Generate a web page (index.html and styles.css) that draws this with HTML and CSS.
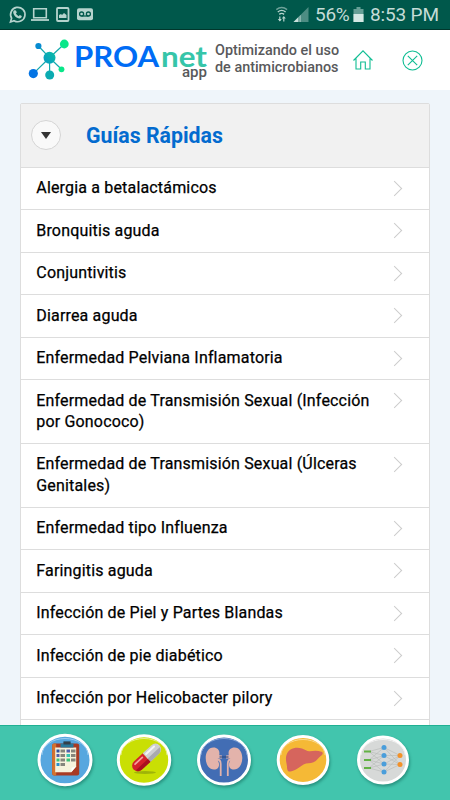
FILE: index.html
```
<!DOCTYPE html>
<html lang="es">

<head>
    <meta charset="UTF-8">
    <meta name="viewport" content="width=device-width, initial-scale=1.0">
    <title>PROAnet app</title>
    <link rel="stylesheet" href="styles.css">
</head>

<body>
    <div class="status">
        <svg class="status-left" width="100" height="30" viewBox="0 0 100 30" fill="none" stroke="#b5d3cd">
            <path d="M10.500 22l1.100-3.800a7.200 7.200 0 1 1 2.500 2.500z" stroke-width="1.7"/>
            <path d="M14.500 10.300l1.500.2.8 2-.9 1.100c.7 1.300 1.500 2 2.800 2.600l1.100-1.100 2 1c0 1.400-1 2.300-2.300 2.300-3.200-.3-6-3.300-6.300-6 0-.9.500-1.800 1.300-2.100z" fill="#b5d3cd" stroke="none"/>
            <path d="M33.700 8.800h12.600v8.900H33.700z" stroke-width="1.6"/>
            <path d="M31 20h18" stroke-width="1.8"/>
            <rect x="57" y="8" width="11.5" height="13" rx="1" stroke-width="1.8"/>
            <path d="M59 18v-3l2-1 1 1 2-2 2.500 2v3z" fill="#b5d3cd" stroke="none"/>
            <rect x="77" y="8.2" width="16" height="12" rx="2" fill="#b5d3cd" stroke="none"/>
            <g stroke="#00584b" stroke-width="1.3">
                <circle cx="81.6" cy="14" r="2"/>
                <circle cx="88.4" cy="14" r="2"/>
                <path d="M81.600 16h6.800"/>
            </g>
        </svg>
        <svg class="signal" width="36" height="30" viewBox="0 0 36 30">
            <g fill="none" stroke="#b5d3cd" stroke-width="1.4">
                <path d="M1.300 9.600q5.400-4.200 10.800 0" opacity=".6"/>
                <path d="M2.800 12q3.900-3.200 7.800 0M4.300 14.400q2.400-2 4.800 0"/>
                <path d="M4.800 21v-4.500M8.800 17v4.500" stroke-width="1.2"/>
            </g>
            <path d="M2.800 19h4l-2 2.500zM6.800 18.500h4l-2-2.500z" fill="#b5d3cd"/>
            <path d="M18.500 22L33.500 7v15z" fill="#4d8d83"/>
            <path d="M18.500 22l7-7v7z" fill="#c8e0db"/>
            <path d="M24 14v8" stroke="#00584b" stroke-width=".8"/>
        </svg>
        <span class="percent">56%</span>
        <svg class="battery" width="12" height="30" viewBox="0 0 12 30">
            <path d="M3.500 7h4v2h3v13H.5V9h3z" fill="#669f96"/>
            <path d="M.5 14h10v8H.5z" fill="#d5e8e4"/>
        </svg>
        <span class="clock">8:53 PM</span>
    </div>

    <header class="header">
        <svg class="logo" width="210" height="60" viewBox="0 0 210 60">
            <defs>
                <linearGradient id="node" x1="43" y1="34" x2="56" y2="22" gradientUnits="userSpaceOnUse">
                    <stop offset="0" stop-color="#0798c4"/>
                    <stop offset="1" stop-color="#0abfa5"/>
                </linearGradient>
            </defs>
            <path d="M49.500 27.700L38.400 16M49.500 27.700L64.300 14M49.500 27.700L33.300 43.600M49.500 27.700L49.700 45M49.500 27.700L61.500 39.300" stroke="#14a9ad" stroke-width="1.2"/>
            <circle cx="49.5" cy="27.7" r="6" fill="url(#node)"/>
            <circle cx="38.4" cy="16" r="3.1" fill="#078bd1"/>
            <circle cx="64.3" cy="14" r="4.4" fill="#08e789"/>
            <circle cx="33.3" cy="43.6" r="4.6" fill="#0474e4"/>
            <circle cx="49.7" cy="45" r="4.5" fill="#0babb1"/>
            <circle cx="61.5" cy="39.3" r="2.9" fill="#08e789"/>
            <text class="logo-name" x="74" y="36.6" textLength="85" lengthAdjust="spacingAndGlyphs" fill="#006cf5">PROA</text>
            <text class="logo-name" x="161" y="36.6" textLength="46" lengthAdjust="spacingAndGlyphs" fill="#36c5a9">net</text>
            <text class="logo-app" x="182" y="47" textLength="25" lengthAdjust="spacingAndGlyphs">app</text>
        </svg>
        <p class="slogan">Optimizando el uso<br>de antimicrobianos</p>
        <svg class="home" width="20" height="20" viewBox="0 0 20 20" fill="none" stroke="#10bd93" stroke-width="1.1">
            <path d="M.5 10.500L10 .9l9.500 9.600M3 8.500v10.500h4.700v-7h4.600v7H17V8.500"/>
        </svg>
        <svg class="close" width="21" height="21" viewBox="0 0 21 21" fill="none" stroke="#10bd93" stroke-width="1.1">
            <circle cx="10.5" cy="10.5" r="9.5"/>
            <path d="M5.800 5.800l9.400 9.400M15.200 5.800l-9.400 9.400"/>
        </svg>
    </header>

    <main class="content">
        <section class="guides">
            <div class="guides-head">
                <button class="toggle" aria-label="Cerrar"><span class="triangle"></span></button>
                <h1>Guías Rápidas</h1>
            </div>
            <ul class="list">
                <li>Alergia a betalactámicos</li>
                <li>Bronquitis aguda</li>
                <li>Conjuntivitis</li>
                <li>Diarrea aguda</li>
                <li>Enfermedad Pelviana Inflamatoria</li>
                <li>Enfermedad de Transmisión Sexual (Infección por Gonococo)</li>
                <li>Enfermedad de Transmisión Sexual (Úlceras Genitales)</li>
                <li>Enfermedad tipo Influenza</li>
                <li>Faringitis aguda</li>
                <li>Infección de Piel y Partes Blandas</li>
                <li>Infección de pie diabético</li>
                <li>Infección por Helicobacter pilory</li>
                <li></li>
            </ul>
        </section>
    </main>

    <nav class="tabs">
        <!-- guides -->
        <svg class="tab" width="60" height="58" viewBox="-30 -29 60 58">
            <ellipse rx="26" ry="24.7" fill="#57a7df" stroke="#fff" stroke-width="3"/>
            <path d="M-23-5A23 16.500 0 0 1 23-5" fill="none" stroke="#9bcdf0"/>
            <rect x="-12.8" y="-16.5" width="27" height="32" rx="2" fill="#a83b24"/>
            <path d="M-12.800-14.500q0-2 2-2h2v32h-2q-2 0-2-2z" fill="#d4722e"/>
            <path d="M-9.800-12.500h21v19l-5 5.800h-16z" fill="#f6f2dc"/>
            <path d="M11.200 6.500l-5 5.800 .5-4.500z" fill="#fff"/>
            <path d="M-4.500-16.500h3v-2h7v2h3v4h-13z" fill="#28799b"/>
            <path d="M-1.500-18.500h7v3h-7z" fill="#343f49"/>
            <path d="M-8.500-10.500h3v3h-3z" fill="#304f9b"/>
            <path d="M-8.500-6h3v3h-3zM1.500-10.500h3.500v3H1.500z" fill="#5260ac"/>
            <path d="M-8.500-1.500h3v3h-3zM1.500-1.500h3.500v3H1.500z" fill="#3ec076"/>
            <path d="M1.500-6h3.500v3H1.500z" fill="#36c5b1"/>
            <path d="M-8.500 3h3v3h-3z" fill="#278fce"/>
            <path d="M-4.500-10.500h4.500v3h-4.500zM-4.500-6h4.500v3h-4.500zM-4.500-1.500h4.500v3h-4.500zM-4.500 3h4.500v3h-4.500zM6-10.500h4.500v3H6zM6-6h4.500v3H6zM6-1.500h4.500v3H6z" fill="#85857c"/>
        </svg>
        <!-- drugs -->
        <svg class="tab" width="60" height="58" viewBox="-30 -29 60 58">
            <ellipse rx="25.7" ry="24.3" fill="#c9df04" stroke="#fff" stroke-width="3"/>
            <path d="M-23-5A23 16.500 0 0 1 23-5" fill="none" stroke="#e6f08b"/>
            <ellipse cx="1" cy="12.5" rx="11" ry="1.5" fill="#9fb409"/>
            <g transform="translate(2.6 -2.5) rotate(-43)">
                <path d="M0-5.700h-12a5.700 5.700 0 0 0 0 11.400H0z" fill="#d4202b"/>
                <path d="M0-5.700h12a5.700 5.700 0 0 1 0 11.400H0z" fill="#cfcfd3"/>
                <path d="M0 1.500h16.500a5.700 5.700 0 0 1-4.500 4.200H0z" fill="#a9a9b0"/>
                <path d="M0 2h-16.500a5.700 5.700 0 0 0 4.500 3.700H0z" fill="#a90f20"/>
                <path d="M-13-3h10" stroke="#f3a09c" stroke-width="1.8" stroke-linecap="round"/>
                <path d="M2-3h11" stroke="#f3f3f5" stroke-width="2" stroke-linecap="round"/>
            </g>
        </svg>
        <!-- kidneys -->
        <svg class="tab" width="60" height="58" viewBox="-30 -29 60 58">
            <ellipse rx="25.5" ry="24" fill="#426db4" stroke="#fff" stroke-width="3"/>
            <path d="M-23-5A23 16.500 0 0 1 23-5" fill="none" stroke="#86a6d8"/>
            <g fill="#e3b3ab">
                <path d="M-5-4c1.500-5-1-8.500-5.500-8.500-5 0-7.800 5-7.800 10.500 0 7 3.800 11.500 8.300 11.500 4.500 0 6-4 4.500-7.500-1.200-2.500-1-4 .5-6z"/>
                <path d="M5-4c-1.500-5 1-8.500 5.500-8.500 5 0 7.800 5 7.800 10.500 0 7-3.800 11.500-8.300 11.500-4.500 0-6-4-4.500-7.500 1.200-2.500 1-4-.5-6z"/>
                <path d="M-7-5l5 .5v3H-7zM7-5l-5 .5v3H7z"/>
            </g>
            <path d="M-7-.5q3.700 0 3.700 4.500v12M7-.5Q3.800-.5 3.800 4v12" fill="none" stroke="#e3b3ab" stroke-width="1.8"/>
            <path d="M-4.500-3h9" stroke="#294b85" stroke-width="1.2"/>
        </svg>
        <!-- liver -->
        <svg class="tab" width="60" height="58" viewBox="-30 -29 60 58">
            <ellipse rx="24.8" ry="23.5" fill="#f5b936" stroke="#fff" stroke-width="3"/>
            <path d="M-22-5A22 15.500 0 0 1 22-5" fill="none" stroke="#fadb90"/>
            <path d="M-16.500-5C-14.500-11-8-13.500-1-11.500c4 1.300 5 3.200 8 2.700 4-.8 8-.8 11.500.5 2 .8 1.500 2.500-.5 4-3 2-4 5-7.500 6.500C7 3.500 4 2.500.5 4.500c-4 2.200-7.500 6-13 7-3 .5-3.500-2-3.500-5-.5-4-1.800-7.500-.5-11.500z" fill="#d6655d"/>
        </svg>
        <!-- network -->
        <svg class="tab" width="60" height="58" viewBox="-30 -29 60 58">
            <ellipse rx="24.5" ry="23" fill="#d7d9d8" stroke="#fff" stroke-width="3"/>
            <path d="M-22-5A22 15.500 0 0 1 22-5" fill="none" stroke="#f1f1f1"/>
            <path d="M-14-8.500L1-12.500M-14-8.500L1-4.500M-14-8.500L1 4M-14 0L1-12.500M-14 0L1-4.500M-14 0L1 4M-14 0L1 12M-14 8L1-4.500M-14 8L1 4M-14 8L1 12M1-12.500L17-4.500L1-4.500L17 4.500L1 4L17-4.500L1 12L17 4.500L1-12.500" fill="none" stroke="#b6b8b7" stroke-width=".6"/>
            <path d="M-19-8.500h7M-19 0h7M-19 8h7" stroke="#62b244" stroke-width="2.2"/>
            <g fill="#4a9edb">
                <circle cx="1" cy="-12.5" r="2.5"/>
                <circle cx="1" cy="-4.5" r="2.5"/>
                <circle cx="1" cy="4" r="2.5"/>
                <circle cx="1" cy="12" r="2.5"/>
            </g>
            <circle cx="17" cy="-4.5" r="2.5" fill="#f39128"/>
            <circle cx="17" cy="4.5" r="2.5" fill="#f39128"/>
        </svg>
    </nav>
</body>

</html>
```
FILE: styles.css
```
* {
    box-sizing: border-box;
}

body {
    margin: 0;
    height: 800px;
    display: flex;
    flex-direction: column;
    overflow: hidden;
    font-family: Roboto, "Liberation Sans", sans-serif;
    background-color: #eff5fa;
}

.status {
    flex: none;
    display: flex;
    align-items: center;
    height: 30px;
    background-color: #00584b;
    border-bottom: 1px solid #00372c;
    color: #c5dcd7;
    font-size: 19px;
    line-height: 30px;
}

.status svg {
    display: block;
    flex: none;
}

.signal {
    margin-left: 175px;
}

.percent {
    width: 35px;
    margin-left: 4px;
    letter-spacing: -0.3px;
}

.battery {
    margin-left: 3px;
}

.clock {
    margin-left: 5px;
    letter-spacing: -0.15px;
    white-space: nowrap;
}

.header {
    flex: none;
    display: flex;
    height: 60px;
    background-color: #fff;
}

.logo {
    display: block;
    flex: none;
}

.logo-name {
    font-family: Lato, sans-serif;
    font-size: 28px;
    font-weight: bold;
}

.logo-app {
    font-size: 15px;
    font-weight: 500;
    fill: #58595b;
}

.slogan {
    width: 126px;
    margin: 12px 0 0 5px;
    color: #58595b;
    font-size: 14.4px;
    font-weight: 500;
    line-height: 17px;
    white-space: nowrap;
}

.home {
    margin: 19.5px 0 0 11.5px;
}

.close {
    margin: 19.5px 0 0 29.5px;
}

.content {
    flex: 1;
    min-height: 0;
    overflow: hidden;
    padding: 13px 20px 0;
}

.guides {
    border: 1px solid #ddd;
    border-radius: 2px;
    background-color: #fff;
}

.guides-head {
    display: flex;
    align-items: center;
    height: 62.5px;
    padding-left: 10px;
    background-color: #f1f1f1;
}

.toggle {
    display: flex;
    align-items: center;
    justify-content: center;
    width: 30px;
    height: 30px;
    padding: 0;
    border: 1px solid #d5d5d5;
    border-radius: 50%;
    background-color: #f9f9f9;
}

.triangle {
    border: 5px solid transparent;
    border-top: 7px solid #333;
    border-bottom: 0;
}

.guides-head h1 {
    margin: 1px 0 0 25px;
    color: #036bcf;
    font-size: 21.3px;
    font-weight: bold;
}

.list {
    margin: 0;
    padding: 0;
    list-style: none;
}

.list li {
    position: relative;
    min-height: 42.5px;
    padding: 9.6px 50px 10.6px 15.3px;
    border-top: 1px solid #ddd;
    font-size: 16px;
    font-weight: 400;
    letter-spacing: 0.17px;
    line-height: 21.3px;
    -webkit-text-stroke: 0.25px #000;
}

.list li::after {
    content: "";
    position: absolute;
    top: 15px;
    right: 29px;
    width: 10px;
    height: 10px;
    border-top: 1px solid #ccc;
    border-right: 1px solid #ccc;
    transform: rotate(45deg);
}

.tabs {
    flex: none;
    display: flex;
    gap: 19.5px;
    height: 75px;
    padding: 4.5px 0 0 34.5px;
    background-color: #42c5ad;
    border-top: 1px solid #20b093;
}

.tab {
    display: block;
    flex: none;
    filter: drop-shadow(1px 2px 1.5px rgba(0, 70, 60, 0.4));
}
```
